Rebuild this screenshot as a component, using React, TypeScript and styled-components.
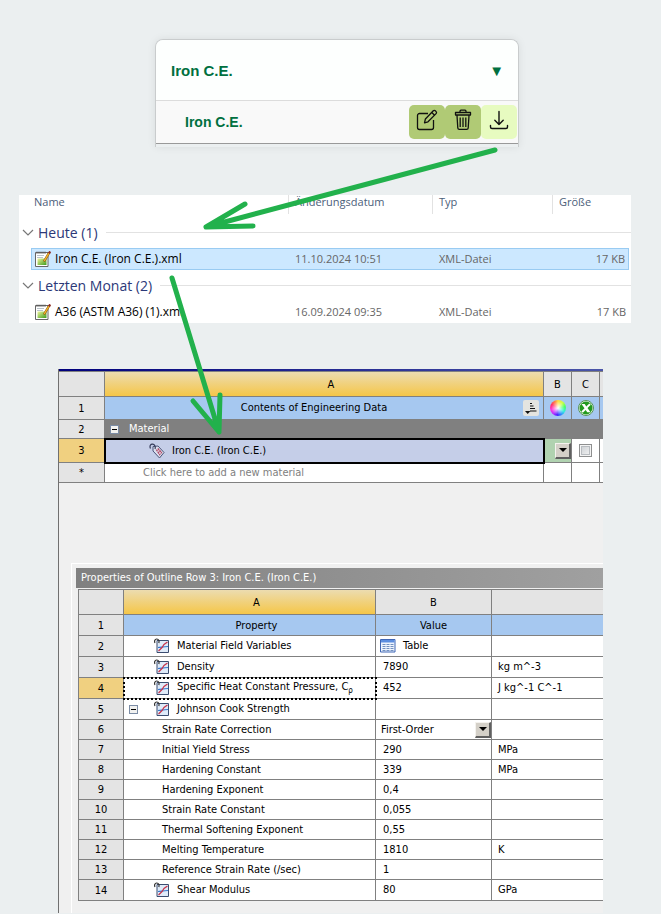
import React from 'react';
import styled, { createGlobalStyle, css } from 'styled-components';

const Global = createGlobalStyle`
  * { box-sizing: border-box; }
  html, body { margin: 0; background: #ebeff0; }
  button { margin: 0; padding: 0; border: 0; background: none; color: inherit; font: inherit; cursor: pointer; }
  svg { display: block; }
`;

const uiFont = '"DejaVu Sans Condensed", "DejaVu Sans", sans-serif';
const line = '#808080';

const Page = styled.main`
  position: relative;
  display: flex;
  flex-direction: column;
  min-height: 100vh;
  padding-top: 39px;
`;

/* ---------- material card ---------- */

const Card = styled.section`
  margin: 0 142px 0 155px;
  border: 1px solid #c9cccd;
  border-bottom: 0;
  border-radius: 8px 8px 0 0;
  box-shadow: 0 0 8px rgba(0, 0, 0, 0.08);
  overflow: hidden;
  font-family: "Liberation Sans", Arial, sans-serif;
  font-weight: bold;
  color: #007040;
`;

const CardHeader = styled.button`
  display: flex;
  align-items: center;
  justify-content: space-between;
  width: 100%;
  height: 60px;
  padding: 0 14px 0 15px;
  background: #fdfffe;
  font-size: 15px;
`;

const CardRow = styled.div`
  display: flex;
  align-items: center;
  justify-content: space-between;
  height: 44px;
  padding: 0 1px 0 29px;
  border-top: 1px solid #dcdcdc;
  border-bottom: 1px solid #999;
  background: #f9f9f9;
  font-size: 14px;
`;

const CardFoot = styled.div`
  height: 3px;
`;

const Actions = styled.div`
  display: flex;
`;

const Action = styled.button<{ $light?: boolean }>`
  display: flex;
  justify-content: center;
  width: 36px;
  height: 34px;
  padding-top: 4px;
  border-radius: 5px;
  background: ${(p) => (p.$light ? '#e7fbc0' : '#b0ca75')};
  color: #111;
`;

const EditIcon = () => (
  <svg width="22" height="22" viewBox="0 0 22 22" fill="none" stroke="currentColor" strokeWidth="1.3" strokeLinejoin="round">
    <path d="M12 4.500H3.500A2 2 0 0 0 1.500 6.500V18.500A2 2 0 0 0 3.500 20.500H15.500A2 2 0 0 0 17.500 18.500V11" />
    <path d="M17.300 1.800a1.400 1.400 0 0 1 2 0l.8.8a1.400 1.400 0 0 1 0 2L12 12.800 8.500 13.800 9.400 10z" />
    <path d="M15.800 3.500l2.800 2.800" />
  </svg>
);

const TrashIcon = () => (
  <svg width="20" height="22" viewBox="0 0 20 22" fill="none" stroke="currentColor" strokeWidth="1.3" strokeLinejoin="round">
    <path d="M7 3V2.200A1 1 0 0 1 8 1.200h4a1 1 0 0 1 1 1V3" />
    <path d="M2.500 3.500h15v2.500h-15zM4 6.500l.8 12.500a1.500 1.500 0 0 0 1.500 1.400h7.400a1.500 1.500 0 0 0 1.500-1.400L16 6.500" />
    <path d="M7.200 8.500v9.500M10 8.500v9.500M12.800 8.500v9.500" />
  </svg>
);

const DownloadIcon = () => (
  <svg width="20" height="22" viewBox="0 0 20 22" fill="none" stroke="currentColor" strokeWidth="1.4" strokeLinecap="round" strokeLinejoin="round">
    <path d="M10 2.500v13M5.800 11.300L10 15.500l4.200-4.200" />
    <path d="M1.500 16.500v1.500a1.500 1.500 0 0 0 1.500 1.500h14a1.500 1.500 0 0 0 1.500-1.500v-1.500" />
  </svg>
);

/* ---------- file list ---------- */

const Files = styled.table`
  width: calc(100% - 49px);
  margin: 48px 30px 0 19px;
  border-collapse: separate;
  border-spacing: 0;
  table-layout: fixed;
  background: #fff;
  font: 11px/14px "Open Sans", "Noto Sans", sans-serif;
  color: #666;
`;

const Col = styled.col<{ $w?: number }>`
  ${(p) => p.$w && css`width: ${p.$w}px;`}
`;

const FileHead = styled.th<{ $first?: boolean }>`
  height: 22px;
  padding: 0;
  vertical-align: top;
  text-align: left;
  font-weight: normal;
  color: #4c607a;
  & > span {
    display: block;
    height: 19px;
    padding-left: ${(p) => (p.$first ? 3 : 6)}px;
    border-left: ${(p) => (p.$first ? 0 : 1)}px solid #e2e2e2;
  }
`;

const GroupCell = styled.td`
  height: 31px;
  padding: 0 0 0 3px;
`;

const GroupLine = styled.div`
  display: flex;
  align-items: center;
  &::after {
    content: '';
    flex: 1;
    height: 1px;
    margin-left: 8px;
    background: #e2e2e2;
  }
`;

const GroupToggle = styled.button`
  display: flex;
  align-items: center;
  gap: 4px;
  font-size: 14px;
  line-height: 20px;
  color: #2c3878;
`;

const FileCell = styled.td<{ $on?: boolean; $edge?: 'start' | 'end' }>`
  height: 22px;
  padding: 0 3px 0 7px;
  ${(p) => p.$on && css`
    background: #cce8ff;
    border: solid #99cbf2;
    border-width: 1px 0;
  `}
  ${(p) => p.$edge === 'start' && css`padding-left: 4px; font-size: 12px; color: #000;`}
  ${(p) => p.$edge === 'start' && p.$on && css`border-left-width: 1px; padding-left: 3px;`}
  ${(p) => p.$edge === 'end' && css`text-align: right;`}
  ${(p) => p.$edge === 'end' && p.$on && css`border-right-width: 1px;`}
`;

const FileName = styled.span`
  display: flex;
  align-items: center;
  gap: 4px;
  white-space: nowrap;
`;

const Chevron = () => (
  <svg width="12" height="8" viewBox="0 0 12 8" fill="none" stroke="#777" strokeWidth="1.2">
    <path d="M1 1l5 5 5-5" />
  </svg>
);

const FileIcon = () => (
  <svg width="16" height="17" viewBox="0 0 16 17">
    <defs>
      <linearGradient id="leaf" x1="0" y1="0" x2="1" y2="1">
        <stop offset="0" stopColor="#eef59a" />
        <stop offset="1" stopColor="#3d9c1e" />
      </linearGradient>
    </defs>
    <path d="M.5 1.500h12.500v14H.5z" fill="#fff" stroke="#666" />
    <path d="M2 4.500h7M2 6.500h6" stroke="#b9c3c9" />
    <path d="M2 .5v2.500M4 .5v2.500M6 .5v2.500M8 .5v2.500M10 .5v2.500" stroke="#555" strokeWidth=".8" />
    <path d="M2.500 7.500h9v6.500h-9z" fill="url(#leaf)" />
    <path d="M14.300 1.500L9 10.500" stroke="#8a5a12" strokeWidth="2.400" />
    <path d="M14 2L9.200 10" stroke="#f5b52a" strokeWidth="1.400" />
    <path d="M15.200.4l-1.200 2" stroke="#8c2a22" strokeWidth="2.200" />
  </svg>
);

/* ---------- engineering data ---------- */

const Workbench = styled.section`
  flex: 1;
  display: flex;
  flex-direction: column;
  margin: 46px 58px 1px;
  border-left: 1px solid #707070;
  background: #f0f0f0;
  font: 11px/14px ${uiFont};
  color: #000;
  &::before {
    content: '';
    height: 2px;
    background: linear-gradient(90deg, #00007c, #4a55a8);
  }
`;

const Grid = styled.table<{ $inset?: boolean }>`
  width: 100%;
  border-collapse: separate;
  border-spacing: 0;
  table-layout: fixed;
  border-top: 1px solid ${line};
  border-left: ${(p) => (p.$inset ? 1 : 0)}px solid ${line};
`;

const Row = styled.tr<{ $h: number }>`
  height: ${(p) => p.$h}px;
`;

type Tone = 'plain' | 'gold' | 'head' | 'blue' | 'dark' | 'active' | 'dotted' | 'green';

const tones: Record<Tone, ReturnType<typeof css>> = {
  plain: css`background: #fff;`,
  gold: css`background: linear-gradient(#ecdcb0, #f5c648);`,
  head: css`background: #e4e4e4;`,
  blue: css`background: #a6c8f0;`,
  dark: css`background: #808080; color: #fff;`,
  active: css`background: #c5cee8; outline: 2px solid #000; outline-offset: -1px;`,
  dotted: css`background: #fff; outline: 2px dotted #000; outline-offset: -1px;`,
  green: css`background: #b0d2b0;`,
};

const cellBase = css<{ $tone?: Tone; $pad?: number; $open?: boolean }>`
  height: inherit;
  padding: 0 0 0 ${(p) => p.$pad ?? 0}px;
  border-right: ${(p) => (p.$open ? 0 : 1)}px solid ${line};
  border-bottom: 1px solid ${line};
  overflow: hidden;
  white-space: nowrap;
  font-weight: normal;
  ${(p) => tones[p.$tone ?? 'plain']}
`;

const Cell = styled.td`${cellBase}`;
const HeadCell = styled.th<{ $drop?: boolean }>`
  ${cellBase}
  padding-top: ${(p) => (p.$drop ? 2 : 0)}px;
  text-align: center;
`;
const NumCell = styled.th<{ $on?: boolean }>`
  padding: 1px 0 0;
  border-right: 1px solid ${line};
  border-bottom: 1px solid ${line};
  background: ${(p) => (p.$on ? '#f0d080' : '#e4e4e4')};
  font-weight: normal;
  text-align: center;
`;

const TitleLine = styled.div`
  display: grid;
  grid-template-columns: 1fr 16px;
  align-items: center;
  padding-right: 4px;
`;

const Inline = styled.div<{ $gap: number }>`
  display: flex;
  align-items: center;
  gap: ${(p) => p.$gap}px;
`;

const Center = styled.div`
  display: flex;
  align-items: center;
  justify-content: center;
`;

const IconButton = styled.button`
  display: flex;
  align-items: center;
  justify-content: center;
  width: 16px;
  height: 16px;
  border-radius: 2px;
  background: #e4e4e0;
`;

const FoldButton = styled.button`
  display: flex;
  align-items: center;
  justify-content: center;
  flex: none;
  width: 9px;
  height: 9px;
  border: 1px solid #7b8ca5;
  background: #f2f2f0;
  &::after {
    content: '';
    width: 5px;
    height: 1px;
    background: #000;
  }
`;

const AddButton = styled.button`
  color: #808080;
`;

const PickBox = styled.div`
  display: flex;
  align-items: center;
  height: 18px;
`;

const Select = styled.select`
  flex: 1;
  min-width: 0;
  margin: 0;
  padding: 0;
  border: 0;
  appearance: none;
  background: none;
  color: inherit;
  font: inherit;
`;

const PickFace = styled.span`
  display: flex;
  align-items: center;
  justify-content: center;
  width: 16px;
  height: 16px;
  border: solid;
  border-width: 1px 2px 2px 1px;
  border-color: #f4f2ee #606060 #606060 #f4f2ee;
  background: #d4d0c8;
  pointer-events: none;
`;

const Check = styled.input`
  appearance: none;
  width: 13px;
  height: 13px;
  margin: 0;
  border: 1px solid #8e8f8f;
  background: linear-gradient(135deg, #c8ccd0, #f6f6f6);
  box-shadow: inset 0 0 0 1px #f4f4f4, inset 0 0 0 2px #b8bcc0;
`;

const Wheel = styled.span`
  width: 16px;
  height: 16px;
  border-radius: 50%;
  background: radial-gradient(#fff, rgba(255, 255, 255, 0) 60%),
    conic-gradient(#fd4, #cf4 40deg, #4f6 80deg, #3ed 120deg, #39f 150deg, #42f 185deg, #b3f 220deg, #f3d 255deg, #f36 300deg, #f84 335deg, #fd4);
`;

const Panel = styled.section`
  display: flex;
  flex-direction: column;
  flex: 1;
  margin: 80px 0 0 12px;
  padding: 4px 0 12px 4px;
  border-left: 1px solid #fff;
  border-top: 1px solid #fff;
`;

const PanelTitle = styled.h2`
  margin: 0;
  padding: 3px 5px;
  background: linear-gradient(90deg, #808080, #a0a0a0);
  color: #fff;
  font: 11px/14px ${uiFont};
`;

const PanelBody = styled.div`
  padding: 1px 0 0 2px;
`;

const Sub = styled.sub`
  font-size: 8px;
  line-height: 8px;
`;

const Triangle = () => (
  <svg width="8" height="4" viewBox="0 0 8 4"><path d="M0 0h8L4 4z" fill="#000" /></svg>
);

const SortIcon = () => (
  <svg width="14" height="14" viewBox="0 0 14 14" fill="none" stroke="#111">
    <path d="M6 2.500h2M6 5h3.500M6 7.500h5M6 10h6.500" strokeWidth="1.200" />
    <path d="M1 10h5.500L3.700 13z" fill="#111" stroke="none" />
  </svg>
);

const ExcelIcon = () => (
  <svg width="16" height="16" viewBox="0 0 16 16">
    <circle cx="8" cy="8" r="7.500" fill="#f4faf2" stroke="#55945a" />
    <circle cx="8" cy="8" r="6.500" fill="#239a20" />
    <path d="M3.500 4h3.200L8.300 6.400 11.300 3.500l1.500 1.200L9.500 8l3 4.200H9.200L7.700 9.900 4.800 12.800 3.300 11.600 6.500 8.300z" fill="#fff" />
  </svg>
);

const TagIcon = () => (
  <svg width="16" height="16" viewBox="0 0 16 16" fill="none">
    <path d="M4 3.500l5-.5 6 6.500-4.500 5.500L4 8z" fill="#dce0ee" stroke="#4a5478" strokeLinejoin="round" />
    <path d="M6.800 7l2.700-2 3.800 4.600-2.700 3.200z" fill="#b0506e" />
    <path d="M7.500 9.500L11 6.500M9 12l3.500-3.500M8 6l4 5.500" stroke="#e8e3ee" strokeWidth=".7" />
    <path d="M1.500 5.500C.3 3 1.600 1 3.600 1.200S6.800 3.500 6 6" stroke="#333a58" strokeWidth="1.200" />
  </svg>
);

const CurveIcon = () => (
  <svg width="16" height="16" viewBox="0 0 16 16" fill="none">
    <path d="M3 2.500h11.500v12H3z" fill="#dfebf9" stroke="#3b4d70" />
    <path d="M4 9.500c3 0 5-1 10-1" stroke="#3779d0" strokeWidth="1.200" />
    <path d="M4.500 13L8 9.500l2-3L13.500 4" stroke="#c8334a" strokeWidth="1.200" />
    <path d="M1 5C0 3 1 .8 2.800 1s2.700 1.700 2 4" stroke="#333" strokeWidth="1.200" />
  </svg>
);

const TableIcon = () => (
  <svg width="16" height="14" viewBox="0 0 16 14" fill="none">
    <path d="M.5.5h14.500v12.500H.5z" fill="#eef4fd" stroke="#3f66b5" />
    <path d="M1 1h13.500v2.500H1z" fill="#5c8ee0" />
    <path d="M2.500 5.500h3m1 0h3m1 0h3M2.500 7.500h3m1 0h3m1 0h3M2.500 9.500h3m1 0h3m1 0h3M2.500 11.500h3m1 0h3m1 0h3" stroke="#7391c0" />
  </svg>
);

const Arrows = styled.svg`
  position: absolute;
  inset: 0;
  width: 100%;
  height: 100%;
  pointer-events: none;
`;

type Prop = {
  name: React.ReactNode;
  value?: string;
  unit?: string;
  kind?: 'curve' | 'group';
  cell?: 'table' | 'select';
  on?: boolean;
};

const properties: Prop[] = [
  { name: 'Material Field Variables', kind: 'curve', cell: 'table', value: 'Table' },
  { name: 'Density', kind: 'curve', value: '7890', unit: 'kg m^-3' },
  { name: <>Specific Heat Constant Pressure, C<Sub>ρ</Sub></>, kind: 'curve', value: '452', unit: 'J kg^-1 C^-1', on: true },
  { name: 'Johnson Cook Strength', kind: 'group' },
  { name: 'Strain Rate Correction', cell: 'select', value: 'First-Order' },
  { name: 'Initial Yield Stress', value: '290', unit: 'MPa' },
  { name: 'Hardening Constant', value: '339', unit: 'MPa' },
  { name: 'Hardening Exponent', value: '0,4' },
  { name: 'Strain Rate Constant', value: '0,055' },
  { name: 'Thermal Softening Exponent', value: '0,55' },
  { name: 'Melting Temperature', value: '1810', unit: 'K' },
  { name: 'Reference Strain Rate (/sec)', value: '1' },
  { name: 'Shear Modulus', kind: 'curve', value: '80', unit: 'GPa' },
];

function Picker({ label, value }: { label: string; value: string }) {
  return (
    <PickBox>
      <Select aria-label={label} defaultValue={value}>
        <option value={value}>{value}</option>
      </Select>
      <PickFace aria-hidden="true"><Triangle /></PickFace>
    </PickBox>
  );
}

function PropertyRow({ item, index }: { item: Prop; index: number }) {
  const pad = item.kind === 'curve' ? 30 : item.kind === 'group' ? 5 : 38;
  return (
    <Row $h={item.kind ? 21 : 20}>
      <NumCell scope="row" $on={item.on}>{index}</NumCell>
      <Cell $pad={pad} $tone={item.on ? 'dotted' : 'plain'}>
        {item.kind ? (
          <Inline $gap={16}>
            {item.kind === 'group' && <FoldButton aria-label="Collapse Johnson Cook Strength" />}
            <Inline $gap={7}><CurveIcon /><span>{item.name}</span></Inline>
          </Inline>
        ) : item.name}
      </Cell>
      <Cell $pad={item.cell === 'table' ? 4 : item.cell === 'select' ? 5 : 7}>
        {item.cell === 'table' && <Inline $gap={7}><TableIcon />{item.value}</Inline>}
        {item.cell === 'select' && <Picker label="Strain Rate Correction" value={item.value!} />}
        {!item.cell && item.value}
      </Cell>
      <Cell $pad={6} $open>{item.unit}</Cell>
    </Row>
  );
}

function FileRow({ name, date, on }: { name: string; date: string; on?: boolean }) {
  return (
    <tr>
      <td />
      <FileCell $edge="start" $on={on}><FileName><FileIcon />{name}</FileName></FileCell>
      <FileCell $on={on}>{date}</FileCell>
      <FileCell $on={on}>XML-Datei</FileCell>
      <FileCell $edge="end" $on={on}>17 KB</FileCell>
      <td />
    </tr>
  );
}

function FileGroup({ title }: { title: string }) {
  return (
    <tr>
      <GroupCell colSpan={6}>
        <GroupLine><GroupToggle aria-expanded="true"><Chevron />{title}</GroupToggle></GroupLine>
      </GroupCell>
    </tr>
  );
}

export default function App() {
  return (
    <Page>
      <Global />
      <Card>
        <CardHeader aria-expanded="true"><span>Iron C.E.</span><span>▼</span></CardHeader>
        <CardRow>
          <span>Iron C.E.</span>
          <Actions>
            <Action aria-label="Edit"><EditIcon /></Action>
            <Action aria-label="Delete"><TrashIcon /></Action>
            <Action aria-label="Download" $light><DownloadIcon /></Action>
          </Actions>
        </CardRow>
        <CardFoot />
      </Card>

      <Files>
        <colgroup><Col $w={12} /><Col /><Col $w={144} /><Col $w={120} /><Col $w={77} /><Col $w={2} /></colgroup>
        <thead>
          <tr>
            <FileHead $first aria-hidden="true" />
            <FileHead $first><span>Name</span></FileHead>
            <FileHead><span>Änderungsdatum</span></FileHead>
            <FileHead><span>Typ</span></FileHead>
            <FileHead colSpan={2}><span>Größe</span></FileHead>
          </tr>
        </thead>
        <tbody>
          <FileGroup title="Heute (1)" />
          <FileRow name="Iron C.E. (Iron C.E.).xml" date="11.10.2024 10:51" on />
          <FileGroup title="Letzten Monat (2)" />
          <FileRow name="A36 (ASTM A36) (1).xml" date="16.09.2024 09:35" />
        </tbody>
      </Files>

      <Workbench>
        <Grid>
          <colgroup><Col $w={46} /><Col /><Col $w={28} /><Col $w={28} /><Col $w={3} /></colgroup>
          <tbody>
            <Row $h={25}>
              <HeadCell $tone="head" />
              <HeadCell $tone="gold" $pad={14} $drop scope="col">A</HeadCell>
              <HeadCell $tone="head" $drop scope="col">B</HeadCell>
              <HeadCell $tone="head" $drop scope="col">C</HeadCell>
              <HeadCell $tone="head" $open />
            </Row>
            <Row $h={23}>
              <NumCell scope="row">1</NumCell>
              <Cell $tone="blue">
                <TitleLine>
                  <Center>Contents of Engineering Data</Center>
                  <IconButton aria-label="Sort"><SortIcon /></IconButton>
                </TitleLine>
              </Cell>
              <Cell $tone="blue"><Center><Wheel /></Center></Cell>
              <Cell $tone="blue"><Center><ExcelIcon /></Center></Cell>
              <Cell $tone="blue" $open />
            </Row>
            <Row $h={19}>
              <NumCell scope="row">2</NumCell>
              <Cell $tone="dark" $pad={5} $open colSpan={4}>
                <Inline $gap={10}><FoldButton aria-label="Collapse Material" />Material</Inline>
              </Cell>
            </Row>
            <Row $h={24}>
              <NumCell scope="row" $on>3</NumCell>
              <Cell $tone="active" $pad={44}><Inline $gap={7}><TagIcon />Iron C.E. (Iron C.E.)</Inline></Cell>
              <Cell $tone="green" $pad={10}><Picker label="Source" value="" /></Cell>
              <Cell><Center><Check type="checkbox" aria-label="Include Iron C.E." /></Center></Cell>
              <Cell $open />
            </Row>
            <Row $h={20}>
              <NumCell scope="row">*</NumCell>
              <Cell $pad={38}><AddButton>Click here to add a new material</AddButton></Cell>
              <Cell />
              <Cell />
              <Cell $open />
            </Row>
          </tbody>
        </Grid>

        <Panel>
          <PanelTitle>Properties of Outline Row 3: Iron C.E. (Iron C.E.)</PanelTitle>
          <PanelBody>
            <Grid $inset>
              <colgroup><Col $w={45} /><Col /><Col $w={116} /><Col $w={111} /></colgroup>
              <tbody>
                <Row $h={25}>
                  <HeadCell $tone="head" />
                  <HeadCell $tone="gold" $pad={14} $drop scope="col">A</HeadCell>
                  <HeadCell $tone="head" $drop scope="col">B</HeadCell>
                  <HeadCell $tone="head" $open />
                </Row>
                <Row $h={21}>
                  <NumCell scope="row">1</NumCell>
                  <HeadCell $tone="blue" $pad={14} $drop scope="col">Property</HeadCell>
                  <HeadCell $tone="blue" $drop scope="col">Value</HeadCell>
                  <HeadCell $tone="blue" $open />
                </Row>
                {properties.map((item, i) => <PropertyRow key={i} item={item} index={i + 2} />)}
              </tbody>
            </Grid>
          </PanelBody>
        </Panel>
      </Workbench>

      <Arrows aria-hidden="true" fill="none" stroke="#22b14c" strokeWidth="5" strokeLinecap="round" strokeLinejoin="round">
        <path d="M495 150L206 227M245 204L206 227L253 226" />
        <path d="M172 278L219 432M193 401L219 432L220 395" />
      </Arrows>
    </Page>
  );
}
